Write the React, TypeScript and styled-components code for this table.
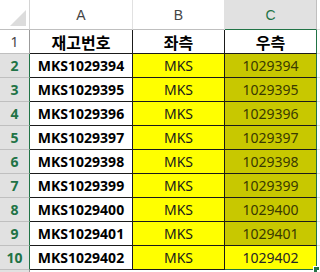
import React from "react";
import styled, { createGlobalStyle } from "styled-components";

const Global = createGlobalStyle`
  html, body { margin: 0; padding: 0; background: #ffffff; }
  body { font-family: "Noto Sans", "Noto Sans CJK KR", sans-serif; }
`;

const GREEN = "#217346";

const Sheet = styled.div`
  display: grid;
  grid-template-columns: 30px 103px 92px 92px 1fr;
  grid-template-rows: 30px repeat(10, 24px) 1fr;
  width: 320px;
  height: 272px;
  overflow: hidden;
  background: #ffffff;
`;

const Corner = styled.div`
  position: relative;
  box-sizing: border-box;
  border-right: 1px solid #d4d4d4;
  border-bottom: 1px solid #bfbfbf;
  background: #ffffff;
  svg { position: absolute; right: 3px; bottom: 3px; }
`;

const ColHeader = styled.div<{ $selected?: boolean }>`
  box-sizing: border-box;
  display: flex;
  align-items: center;
  justify-content: center;
  background: ${(p) => (p.$selected ? "#e1e1e1" : "#ffffff")};
  border-right: 1px solid ${(p) => (p.$selected ? "#bfbfbf" : "#e1e1e1")};
  border-bottom: 1px solid ${(p) => (p.$selected ? GREEN : "#bfbfbf")};
  color: ${(p) => (p.$selected ? GREEN : "#444444")};
  font-family: "Liberation Sans", "Noto Sans", sans-serif;
  font-size: 14px;
  padding-top: 1px;
`;

const RowHeader = styled.div<{ $selected?: boolean }>`
  box-sizing: border-box;
  display: flex;
  align-items: center;
  justify-content: center;
  background: ${(p) => (p.$selected ? "#e1e1e1" : "#ffffff")};
  border-right: 1px solid ${(p) => (p.$selected ? GREEN : "#9b9b9b")};
  border-bottom: 1px solid #bfbfbf;
  color: ${(p) => (p.$selected ? GREEN : "#444444")};
  font-family: "Noto Sans", sans-serif;
  font-weight: ${(p) => (p.$selected ? 700 : 400)};
  font-size: 14px;
`;

const Cell = styled.div<{
  $bg?: string;
  $bold?: boolean;
  $color?: string;
  $right?: string;
  $bottom?: string;
  $korean?: boolean;
}>`
  box-sizing: border-box;
  display: flex;
  align-items: center;
  justify-content: center;
  background: ${(p) => p.$bg ?? "#ffffff"};
  border-right: 1px solid ${(p) => p.$right ?? "#1a1a1a"};
  border-bottom: 1px solid ${(p) => p.$bottom ?? "#1a1a1a"};
  color: ${(p) => p.$color ?? "#000000"};
  font-family: ${(p) =>
    p.$korean
      ? `"Noto Sans CJK KR", "Noto Sans", sans-serif`
      : `"Noto Sans", "Noto Sans CJK KR", sans-serif`};
  font-weight: ${(p) => (p.$bold ? 700 : 400)};
  font-size: ${(p) => (p.$korean ? "16px" : "14px")};
  white-space: nowrap;
`;

const Blank = styled.div<{ $bottom?: boolean }>`
  box-sizing: border-box;
  background: #ffffff;
  border-bottom: ${(p) => (p.$bottom ? "1px solid #e1e1e1" : "none")};
`;

const FooterHeader = styled.div`
  background: #e1e1e1;
  border-right: 1px solid #9b9b9b;
  box-sizing: border-box;
`;

const FooterCell = styled.div`
  position: relative;
  background: #ffffff;
`;

const Handle = styled.span`
  position: absolute;
  right: -3px;
  top: -4px;
  width: 5px;
  height: 5px;
  background: ${GREEN};
  border: 1px solid #ffffff;
`;

const rows = Array.from({ length: 9 }, (_, i) => 1029394 + i);

export default function App() {
  return (
    <>
      <Global />
      <Sheet>
        <Corner>
          <svg width="16" height="16" viewBox="0 0 16 16">
            <polygon points="16,0 16,16 0,16" fill="#dcdcdc" />
          </svg>
        </Corner>
        <ColHeader>A</ColHeader>
        <ColHeader>B</ColHeader>
        <ColHeader $selected>C</ColHeader>
        <Blank $bottom />

        <RowHeader>1</RowHeader>
        <Cell $bold $korean>재고번호</Cell>
        <Cell $bold $korean>좌측</Cell>
        <Cell $bold $korean $right={GREEN}>우측</Cell>
        <Blank $bottom />

        {rows.map((n, i) => {
          const last = i === rows.length - 1;
          return (
            <React.Fragment key={n}>
              <RowHeader $selected>{i + 2}</RowHeader>
              <Cell $bold>MKS{n}</Cell>
              <Cell $bg="#ffff00" $color="#1a1a1a">MKS</Cell>
              <Cell
                $bg={last ? "#ffff00" : "#c8c800"}
                $color={last ? "#262626" : "#3a3a00"}
                $right={GREEN}
                $bottom={last ? GREEN : "#1a1a1a"}
              >
                {n}
              </Cell>
              <Blank $bottom />
            </React.Fragment>
          );
        })}

        <FooterHeader />
        <FooterCell />
        <FooterCell />
        <FooterCell>
          <Handle />
        </FooterCell>
        <FooterCell />
      </Sheet>
    </>
  );
}
